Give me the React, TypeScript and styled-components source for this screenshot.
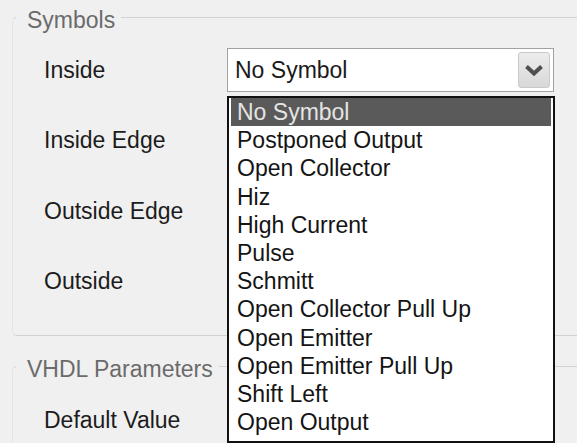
import React from "react";
import styled, { createGlobalStyle } from "styled-components";

const GlobalStyle = createGlobalStyle`
  html, body {
    margin: 0;
    padding: 0;
    background: #f0f0f0;
    overflow: hidden;
  }
  body {
    font-family: "Liberation Sans", Arial, sans-serif;
    font-size: 23px;
    color: #1c1c1c;
  }
`;

const Page = styled.div`
  width: 577px;
  height: 443px;
  overflow: hidden;
`;

const Group = styled.fieldset<{ $mt?: number }>`
  margin: ${(p) => p.$mt ?? 0}px -20px 0 12px;
  padding: 0;
  border: 1px solid #d2d2d2;
  border-left-color: #e4e4e4;
  border-radius: 5px;
  min-width: 0;
`;

const Legend = styled.legend`
  margin-left: 3px;
  padding: 6px 6px 0 11px;
  line-height: 28px;
  color: #6b6b6b;
`;

const Fields = styled.div<{ $pt: number; $pb: number }>`
  display: grid;
  grid-template-columns: 183px 327px;
  grid-auto-rows: 44px;
  row-gap: 26.4px;
  align-items: center;
  padding: ${(p) => p.$pt}px 0 ${(p) => p.$pb}px 31px;
`;

const Label = styled.span`
  line-height: 28px;
  color: #1c1c1c;
  white-space: nowrap;
`;

const ComboBox = styled.div`
  position: relative;
  height: 44px;
  box-sizing: border-box;
  border: 1px solid #a2a2a2;
  background: #fff;
  display: flex;
  align-items: center;
  justify-content: space-between;
  padding: 0 3px 0 7px;
`;

const ComboValue = styled.span`
  line-height: 28px;
  color: #1a1a1a;
  white-space: nowrap;
`;

const DropButton = styled.span`
  margin-left: auto;
  width: 32px;
  height: 36px;
  box-sizing: border-box;
  border: 1px solid #c9c9c9;
  border-radius: 3px;
  background: linear-gradient(#ececec, #d8d8d8);
  display: flex;
  align-items: center;
  justify-content: center;
`;

const TextBox = styled.div`
  height: 44px;
  box-sizing: border-box;
  border: 1px solid #a2a2a2;
  background: #fff;
`;

const DropList = styled.ul`
  position: absolute;
  top: 47px;
  left: -1px;
  width: 328px;
  box-sizing: border-box;
  margin: 0;
  padding: 0 2px 4.6px 2px;
  list-style: none;
  background: #fff;
  border: 2px solid #111;
  z-index: 2;
`;

const Item = styled.li<{ $selected?: boolean }>`
  line-height: 28.2px;
  padding-left: 6px;
  white-space: nowrap;
  background: ${(p) => (p.$selected ? "#5a5a5a" : "transparent")};
  color: ${(p) => (p.$selected ? "#e4e4e4" : "#141414")};
`;

const Chevron = () => (
  <svg width="20" height="13" viewBox="0 0 20 13">
    <polyline
      points="2.5,2.5 10,9.5 17.5,2.5"
      fill="none"
      stroke="#4e4e4e"
      strokeWidth="4"
      strokeLinejoin="miter"
    />
  </svg>
);

const options = [
  "No Symbol",
  "Postponed Output",
  "Open Collector",
  "Hiz",
  "High Current",
  "Pulse",
  "Schmitt",
  "Open Collector Pull Up",
  "Open Emitter",
  "Open Emitter Pull Up",
  "Shift Left",
  "Open Output",
];

const Combo: React.FC<{ value?: string; open?: boolean }> = ({ value, open }) => (
  <ComboBox>
    {value && <ComboValue>{value}</ComboValue>}
    <DropButton>
      <Chevron />
    </DropButton>
    {open && (
      <DropList role="listbox">
        {options.map((o) => (
          <Item key={o} $selected={o === value}>
            {o}
          </Item>
        ))}
      </DropList>
    )}
  </ComboBox>
);

export default function App() {
  return (
    <Page>
      <GlobalStyle />
      <Group>
        <Legend>Symbols</Legend>
        <Fields $pt={14} $pb={32}>
          <Label>Inside</Label>
          <Combo value="No Symbol" open />
          <Label>Inside Edge</Label>
          <Combo />
          <Label>Outside Edge</Label>
          <Combo />
          <Label>Outside</Label>
          <Combo />
        </Fields>
      </Group>
      <Group $mt={13}>
        <Legend>VHDL Parameters</Legend>
        <Fields $pt={15} $pb={20}>
          <Label>Default Value</Label>
          <TextBox />
        </Fields>
      </Group>
    </Page>
  );
}
